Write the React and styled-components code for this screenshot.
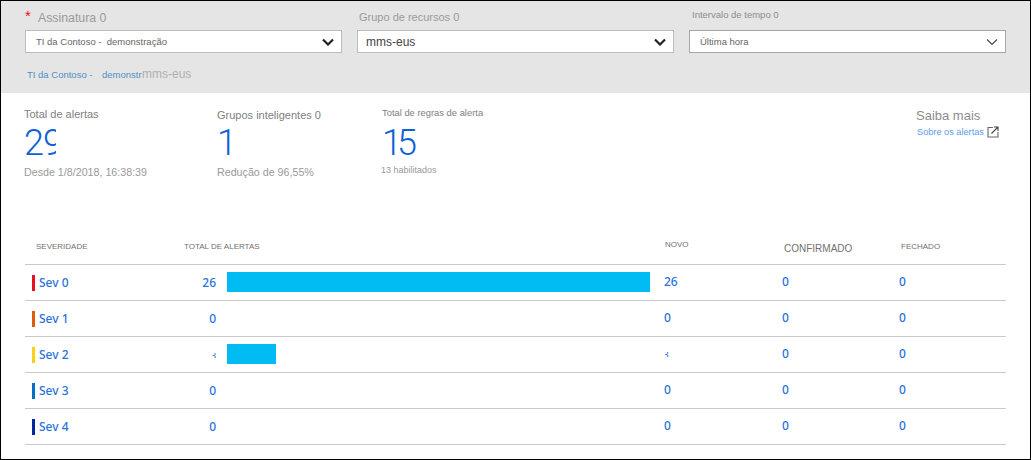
import React from 'react';
import styled, { createGlobalStyle } from 'styled-components';

const rows = [
  { name: 'Sev 0', color: '#e81123', total: '26', bar: 423, fresh: '26' },
  { name: 'Sev 1', color: '#e05c0a', total: '0', bar: 0, fresh: '0' },
  { name: 'Sev 2', color: '#fcd116', total: '3', bar: 49, fresh: '3', cut: true },
  { name: 'Sev 3', color: '#0072c6', total: '0', bar: 0, fresh: '0' },
  { name: 'Sev 4', color: '#002b9a', total: '0', bar: 0, fresh: '0' },
];

const Chevron = ({ thin }) => (
  <ChevronIcon viewBox="0 0 12 8">
    <path d="M1 1.5 L6 6.5 L11 1.5" fill="none" stroke={thin ? '#444' : '#222'} strokeWidth={thin ? 1.1 : 2.2} />
  </ChevronIcon>
);

const App = () => (
  <Page>
    <GlobalStyle />
    <FilterBar>
      <Filters>
        <Filter>
          <SubscriptionLabel><Star>*</Star>Assinatura 0</SubscriptionLabel>
          <Select>
            <SelectText $size={9.5}>TI da Contoso -&nbsp; demonstração</SelectText>
            <Chevron />
          </Select>
        </Filter>
        <Filter>
          <GroupLabel>Grupo de recursos 0</GroupLabel>
          <Select $compact>
            <SelectText $size={12} $dark>mms-eus</SelectText>
            <Chevron />
          </Select>
        </Filter>
        <Filter>
          <TimeLabel>Intervalo de tempo 0</TimeLabel>
          <Select $strong>
            <SelectText $size={9.5}>Última hora</SelectText>
            <Chevron thin />
          </Select>
        </Filter>
      </Filters>
      <Breadcrumb>
        <Crumb>TI da Contoso -</Crumb>
        <CrumbCut>demonstração</CrumbCut>
        <CrumbLast>mms-eus</CrumbLast>
      </Breadcrumb>
    </FilterBar>

    <Stats>
      <Stat $width={193}>
        <StatLabel $size={11}>Total de alertas</StatLabel>
        <BigCut><BigNumber $tracking={-1}>29</BigNumber></BigCut>
        <StatNote $size={10.7}>Desde 1/8/2018, 16:38:39</StatNote>
      </Stat>
      <Stat $width={165}>
        <StatLabel $size={11} $top={1}>Grupos inteligentes 0</StatLabel>
        <BigNumber>1</BigNumber>
        <StatNote $size={10.7}>Redução de 96,55%</StatNote>
      </Stat>
      <Stat $width={534}>
        <StatLabel $size={9.4} $top={-1}>Total de regras de alerta</StatLabel>
        <BigNumber $tracking={-5}>15</BigNumber>
        <StatNote $size={9} $top={-2} $left={-1}>13 habilitados</StatNote>
      </Stat>
      <LearnMore>
        <LearnTitle>Saiba mais</LearnTitle>
        <LearnLink>
          Sobre os alertas
          <ExternalIcon viewBox="0 0 12 12">
            <path d="M6 1.5 H1 V11 H11 V6" fill="none" stroke="#666" strokeWidth="1.1" />
            <path d="M4.5 7.5 L10.5 1.5 M7 1 H11 V5" fill="none" stroke="#444" strokeWidth="1.1" />
          </ExternalIcon>
        </LearnLink>
      </LearnMore>
    </Stats>

    <Table>
      <HeadRow>
        <HeadCell $left={11}>SEVERIDADE</HeadCell>
        <HeadCell>TOTAL DE ALERTAS</HeadCell>
        <HeadCell $top={-4}>NOVO</HeadCell>
        <HeadCell $size={10} $top={4}>CONFIRMADO</HeadCell>
        <HeadCell>FECHADO</HeadCell>
      </HeadRow>
      {rows.map(row => (
        <Row key={row.name}>
          <SevCell>
            <SevMark $color={row.color} />
            <span>{row.name}</span>
          </SevCell>
          <TotalCell>{row.cut ? <CutDigit>{row.total}</CutDigit> : row.total}</TotalCell>
          <BarCell>{row.bar > 0 && <Bar style={{ width: row.bar }} />}</BarCell>
          <CountCell>{row.cut ? <CutDigit>{row.fresh}</CutDigit> : row.fresh}</CountCell>
          <CountCell>0</CountCell>
          <CountCell>0</CountCell>
        </Row>
      ))}
    </Table>
  </Page>
);

const GlobalStyle = createGlobalStyle`
  html, body {
    margin: 0;
    background: #fff;
  }
`;

const Page = styled.div`
  box-sizing: border-box;
  width: 1031px;
  height: 460px;
  border: 1px solid #000;
  overflow: hidden;
  background: #fff;
  font-family: "Liberation Sans", Arial, sans-serif;
`;

const FilterBar = styled.div`
  height: 92px;
  background: #e5e5e5;
  padding: 0 24px;
  box-sizing: border-box;
`;

const Filters = styled.div`
  display: grid;
  grid-template-columns: repeat(3, 317px);
  column-gap: 15px;
`;

const Filter = styled.div`
  display: flex;
  flex-direction: column;
  height: 52px;
  justify-content: flex-end;
`;

const SubscriptionLabel = styled.div`
  display: flex;
  align-items: flex-start;
  height: 22px;
  font-size: 12.3px;
  line-height: 21px;
  color: #9a9a9a;
`;

const Star = styled.span`
  width: 13px;
  font-size: 15px;
  line-height: 16px;
  color: #e81123;
`;

const GroupLabel = styled.div`
  height: 23px;
  padding-left: 2px;
  font-size: 11px;
  line-height: 20px;
  color: #9a9a9a;
`;

const TimeLabel = styled.div`
  height: 25px;
  padding-left: 3px;
  font-size: 9.5px;
  line-height: 20px;
  color: #8c8c8c;
`;

const Select = styled.div`
  box-sizing: border-box;
  display: flex;
  align-items: center;
  justify-content: space-between;
  height: 23px;
  padding: 0 7px 0 ${props => (props.$compact ? 8 : 10)}px;
  background: #fff;
  border: 1px solid ${props => (props.$strong ? '#a6a6a6' : '#bcbcbc')};
`;

const SelectText = styled.span`
  font-size: ${props => props.$size}px;
  color: ${props => (props.$dark ? '#444' : '#666')};
`;

const ChevronIcon = styled.svg`
  width: 12px;
  height: 8px;
  flex: none;
`;

const Breadcrumb = styled.div`
  display: flex;
  align-items: center;
  height: 20px;
  margin-top: 11px;
  padding-left: 2px;
`;

const Crumb = styled.span`
  width: 75px;
  font-size: 9.5px;
  color: #4f8fc8;
`;

const CrumbCut = styled(Crumb)`
  width: 40px;
  overflow: hidden;
  white-space: nowrap;
`;

const CrumbLast = styled.span`
  font-size: 12px;
  color: #b0b0b0;
`;

const Stats = styled.div`
  display: flex;
  height: 134px;
  padding: 13px 0 0 23px;
  box-sizing: border-box;
`;

const Stat = styled.div`
  width: ${props => props.$width}px;
  flex: none;
`;

const StatLabel = styled.div`
  height: 16px;
  margin-top: ${props => props.$top || 0}px;
  margin-bottom: ${props => -(props.$top || 0)}px;
  font-size: ${props => props.$size}px;
  line-height: 16px;
  color: #808080;
`;

const BigCut = styled.div`
  width: 32px;
  overflow: hidden;
`;

const BigNumber = styled.div`
  height: 42px;
  font-family: Roboto, "Liberation Sans", sans-serif;
  font-size: 36px;
  font-weight: 300;
  letter-spacing: ${props => props.$tracking || 0}px;
  line-height: 43px;
  color: #0f62d6;
`;

const StatNote = styled.div`
  margin-top: ${props => props.$top || 0}px;
  margin-left: ${props => props.$left || 0}px;
  font-size: ${props => props.$size}px;
  line-height: 16px;
  color: #9a9a9a;
`;

const LearnMore = styled.div`
  padding-top: 1px;
`;

const LearnTitle = styled.div`
  font-size: 13px;
  line-height: 18px;
  color: #8c8c8c;
`;

const LearnLink = styled.div`
  display: flex;
  align-items: center;
  gap: 3px;
  padding-left: 1px;
  font-size: 9.2px;
  line-height: 14px;
  color: #5c9be8;
`;

const ExternalIcon = styled.svg`
  width: 12px;
  height: 12px;
`;

const Table = styled.div`
  width: 981px;
  margin-left: 24px;
`;

const HeadRow = styled.div`
  display: grid;
  grid-template-columns: 159px 481px 119px 117px 105px;
  align-items: center;
  height: 37px;
  margin-top: 1px;
  border-bottom: 1px solid #c8c8c8;
  box-sizing: border-box;
`;

const HeadCell = styled.div`
  margin-top: ${props => props.$top || 0}px;
  padding-left: ${props => props.$left || 0}px;
  font-size: ${props => props.$size || 8}px;
  color: #707070;
  white-space: nowrap;
`;

const Row = styled.div`
  display: grid;
  grid-template-columns: 159px 43px 423px 14px 118px 117px 107px;
  align-items: center;
  height: 36px;
  border-bottom: 1px solid #c8c8c8;
  box-sizing: border-box;
  font-family: "Noto Sans", sans-serif;
  font-size: 12px;
  font-weight: 500;
  color: #2a72dc;
`;

const SevCell = styled.div`
  display: flex;
  align-items: center;
  gap: 4px;
  padding-left: 7px;
`;

const SevMark = styled.span`
  width: 3px;
  height: 16px;
  background: ${props => props.$color};
`;

const TotalCell = styled.div`
  padding-right: 11px;
  text-align: right;
`;

const BarCell = styled.div`
  display: flex;
  align-items: center;
  height: 20px;
  margin-top: -2px;
`;

const Bar = styled.div`
  height: 20px;
  background: #00bcf2;
`;

const CountCell = styled.div`
  margin-top: -2px;
  &:nth-child(4) {
    grid-column: 5;
  }
`;

const CutDigit = styled.span`
  display: inline-block;
  height: 5px;
  overflow: hidden;
  line-height: 6px;
  font-size: 8px;
  vertical-align: middle;
`;

export default App;
